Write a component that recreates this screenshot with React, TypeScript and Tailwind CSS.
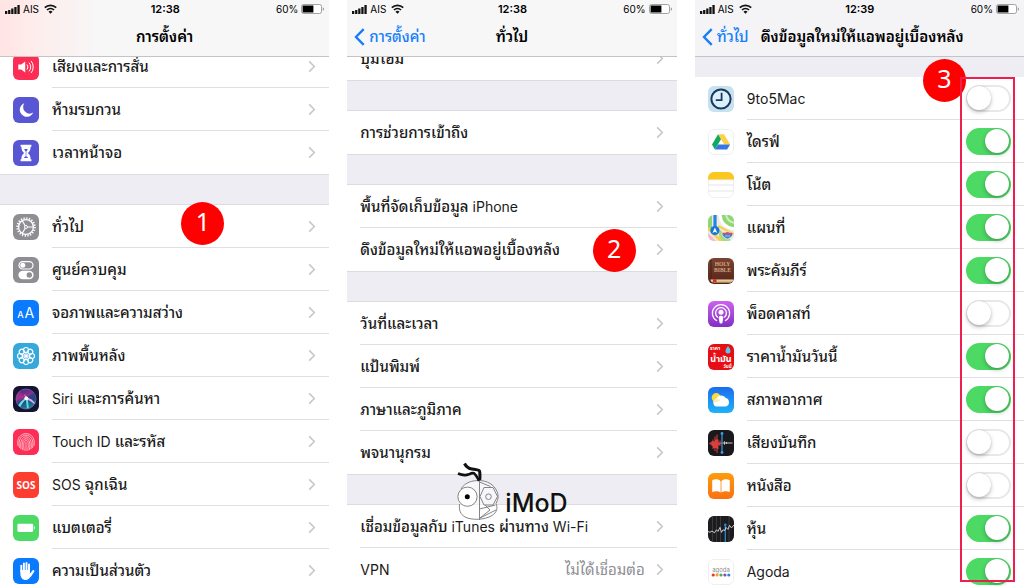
import React from 'react';

type IconProps = { label?: string };

const svgProps = { viewBox: '0 0 26 26', className: 'size-[26px] shrink-0', 'aria-hidden': true } as const;

function Tile({ fill, children }: { fill: string; children?: React.ReactNode }) {
  return (
    <svg {...svgProps}>
      <rect width="26" height="26" rx="6" fill={fill} />
      {children}
    </svg>
  );
}

const SoundIcon = () => (
  <Tile fill="#fe2d55">
    <path d="M5.3 10.6h3l3.9-3.2v11.2l-3.9-3.2h-3z" fill="#fff" />
    <path d="M14.2 10.8a3.4 3.4 0 0 1 0 4.4M16.3 9a6 6 0 0 1 0 8M18.4 7.4a9 9 0 0 1 0 11.2" fill="none" stroke="#fff" strokeWidth="1" strokeLinecap="round" />
  </Tile>
);

const MoonIcon = () => (
  <Tile fill="#5856d2">
    <path d="M11.3 6.2a7 7 0 1 0 8.9 9.3A6.6 6.6 0 0 1 11.3 6.2z" fill="#fff" />
  </Tile>
);

const HourglassIcon = () => (
  <Tile fill="#5856d2">
    <path d="M7.6 4.8h10.8v2h-.8c0 3.2-.9 4.6-2.7 6.2 1.8 1.6 2.7 3 2.7 6.2h.8v2H7.6v-2h.8c0-3.2.9-4.6 2.7-6.2-1.8-1.6-2.7-3-2.7-6.2h-.8z" fill="#fff" />
    <path d="M11.3 9h3.4c-.3 1.3-.7 2-1.4 2.600v4.700c.9.400 1.500.900 1.800 1.800h-4.200c.3-.9.9-1.400 1.800-1.800v-4.700c-.7-.6-1.100-1.300-1.400-2.600z" fill="#5856d2" />
  </Tile>
);

const GearIcon = () => (
  <Tile fill="#8e8e93">
    <g fill="none" stroke="#fff">
      <circle cx="13" cy="13" r="8.8" strokeWidth="1.9" strokeDasharray="1.3 1.46" />
      <circle cx="13" cy="13" r="7.4" strokeWidth="1.3" />
      <path d="M14.500 13h5.700M12.200 11.700l-2.900-5M12.200 14.300l-2.900 5" strokeWidth="1.2" />
      <circle cx="13" cy="13" r="1.500" strokeWidth="1" />
    </g>
  </Tile>
);

const ControlsIcon = () => (
  <Tile fill="#8e8e93">
    <rect x="6" y="4.600" width="14" height="7.400" rx="3.700" fill="none" stroke="#fff" strokeWidth="1.200" />
    <circle cx="9.800" cy="8.300" r="2.500" fill="#fff" />
    <rect x="5.400" y="13.800" width="15.200" height="8.400" rx="4.200" fill="#fff" />
    <circle cx="16.300" cy="18" r="2.700" fill="#8e8e93" />
  </Tile>
);

const DisplayIcon = () => (
  <Tile fill="#0a7aff">
    <text x="4.300" y="17.700" fontSize="9" fontWeight="500" fill="#fff" fontFamily="Inter, sans-serif">A</text>
    <text x="11.600" y="17.700" fontSize="14" fill="#fff" fontFamily="Inter, sans-serif">A</text>
  </Tile>
);

const WallpaperIcon = () => (
  <Tile fill="#36a9dc">
    <g fill="none" stroke="#fff" strokeWidth="1.100">
      {[0, 45, 90, 135, 180, 225, 270, 315].map((a) => (
        <circle key={a} cx="13" cy="7" r="2.500" transform={`rotate(${a} 13 13)`} />
      ))}
      {[22, 67, 112, 157, 202, 247, 292, 337].map((a) => (
        <circle key={a} cx="13" cy="10" r="1.400" strokeWidth=".6" transform={`rotate(${a} 13 13)`} />
      ))}
    </g>
    <circle cx="13" cy="13" r="1.600" fill="#fff" />
  </Tile>
);

const SiriIcon = () => (
  <Tile fill="#161433">
    <defs>
      <linearGradient id="siri-orb" x1=".3" y1="0" x2=".6" y2="1">
        <stop offset="0" stopColor="#4a2a86" />
        <stop offset=".4" stopColor="#93318f" />
        <stop offset=".6" stopColor="#274a86" />
        <stop offset="1" stopColor="#1b8697" />
      </linearGradient>
    </defs>
    <circle cx="13" cy="13" r="10" fill="url(#siri-orb)" stroke="#7c84b8" strokeWidth=".6" />
    <path d="M13 12 6 5.500C4 7.500 3.200 10 3.200 13z" fill="#b6308c" opacity=".6" />
    <path d="M13.500 11 21 7c1.500 2.500 2 5 1.800 8z" fill="#23447e" opacity=".8" />
    <path d="M13.500 11.500C9 14 6.500 17 5.500 19.500l1.800 1.500c1.200-3 3.500-6 6.200-8z" fill="#67e8e4" />
    <path d="M12.800 12.500 14 22.500l1.800-.3-1-9.700z" fill="#5ee0d5" />
    <path d="M14 11.500c3.500 1 6 2.800 7.800 5.500l-.6 1c-2.400-2.200-4.700-3.500-7.700-4.500z" fill="#d9b8f5" />
    <path d="M13 12.500 11 8l3.500 3.500z" fill="#ee9ed8" />
    <circle cx="13.300" cy="12.300" r="1.900" fill="#fff" />
  </Tile>
);

const TouchIcon = () => (
  <Tile fill="#fe2d55">
    <g fill="none" stroke="#ffd3dc" strokeWidth=".8" strokeLinecap="round">
      <path d="M5 16.500C3.400 9.500 7.600 4.600 13 4.600s9.600 4.900 8 11.900" />
      <path d="M6.400 18.500c-1.700-8.500 2.500-12.300 6.600-12.300s8.300 3.800 6.600 12.300" />
      <path d="M7.900 19.800C6.600 11.500 9.700 7.900 13 7.900s6.400 3.600 5.100 11.900" />
      <path d="M9.600 20.700c-1.500-8 .8-11 3.400-11s4.900 3 3.400 11" />
      <path d="M11.200 21.300c-1-7-.4-9.900 1.800-9.900s2.800 2.900 1.800 9.900" />
      <path d="M13 13.200v8.300" />
    </g>
  </Tile>
);

const SosIcon = () => (
  <Tile fill="#fc3d30">
    <text x="13" y="16.800" fontSize="10" fontWeight="700" textAnchor="middle" fill="#fff" fontFamily="'Open Sans', sans-serif">SOS</text>
  </Tile>
);

const BatteryTileIcon = () => (
  <Tile fill="#4cd964">
    <rect x="4.400" y="8.700" width="15.800" height="8.200" rx="1.400" fill="#fff" />
    <path d="M21 11.200c1.200.4 1.200 2.800 0 3.200z" fill="#fff" />
  </Tile>
);

const HandIcon = () => (
  <Tile fill="#0a7aff">
    <g stroke="#fff" strokeLinecap="round" fill="none" strokeWidth="1.900">
      <path d="M8.300 14V7.600M10.900 13V5.400M13.500 13V5M16 13V6.500" />
      <path d="M17.300 17.500l3-4.300" strokeWidth="2.200" />
    </g>
    <path d="M7.400 12h9.500v3.500l2.400-1.500c-.8 3-2.300 7.600-5.900 7.900-4 .3-6-2.500-6-6z" fill="#fff" />
  </Tile>
);

const ClockAppIcon = () => (
  <Tile fill="#c7e1ef">
    <circle cx="13" cy="13" r="9.600" fill="#dcf0fa" stroke="#173a60" strokeWidth="2" />
    <path d="M13.600 6.800v7.400H7.800" fill="none" stroke="#173a60" strokeWidth="1.800" />
  </Tile>
);

const WhiteTile = ({ children }: { children: React.ReactNode }) => (
  <svg {...svgProps}>
    <rect x=".5" y=".5" width="25" height="25" rx="5.500" fill="#fff" stroke="#efefef" />
    {children}
  </svg>
);

const DriveIcon = () => (
  <WhiteTile>
    <path d="M10.100 5.200h5.900l6.100 10.300h-5.900z" fill="#ffcf44" />
    <path d="M10.100 5.200 13 10.300 6.900 20.600 4 15.500z" fill="#11a861" />
    <path d="M10 15.500h12.100l-3 5.100H6.900z" fill="#3777e3" />
  </WhiteTile>
);

const NotesIcon = () => (
  <WhiteTile>
    <path d="M0 7.400V6a6 6 0 0 1 6-6h14a6 6 0 0 1 6 6v1.400z" fill="#fcc71c" />
    <path d="M.5 13h25M.5 19h25" stroke="#dedede" strokeWidth=".8" />
    <path d="M0 7.800h26" stroke="#d9ccb0" strokeWidth=".6" strokeDasharray="1 .6" />
  </WhiteTile>
);

const MapsIcon = () => (
  <svg {...svgProps}>
    <clipPath id="maps-clip"><rect width="26" height="26" rx="6" /></clipPath>
    <g clipPath="url(#maps-clip)">
      <rect width="26" height="26" fill="#efe9df" />
      <path d="M13 0h13v14C18 14 13 8 13 0z" fill="#8fd674" />
      <path d="M0 0h4v13l-4 3z" fill="#8fd674" />
      <path d="M0 18l8 8H0z" fill="#f6b8cd" />
      <path d="M10 13l14 13H12z" fill="#a6dc86" />
      <path d="M12-2c0 10 5 15 15 16" fill="none" stroke="#fff" strokeWidth="3" />
      <path d="M18-2c0 6 3 9 9 10" fill="none" stroke="#cdeeb9" strokeWidth="2" />
      <path d="M0 13l13 13" stroke="#fad04b" strokeWidth="3" />
      <path d="M10 11l16 8" stroke="#fad04b" strokeWidth="2" />
      <path d="M7 0v14" stroke="#2583ea" strokeWidth="3.200" />
      <circle cx="6.900" cy="15.600" r="4.600" fill="#1877dd" />
      <path d="M6.900 12.400l2.400 5.600-2.400-1.200-2.400 1.200z" fill="#fff" />
      <path d="M14.500 17.500c2 .5 3-.2 5-.8 2 .6 3 1.300 5 .8 1.200 3-1.500 5.500-5 6.500-3.500-1-6.200-3.500-5-6.500z" fill="#3c83dd" stroke="#fff" strokeWidth=".6" />
      <path d="M14.800 17.800h9.500v1.600h-9.500z" fill="#e64a50" />
      <path d="M17 21h5" stroke="#9cc4f2" strokeWidth="1" />
    </g>
  </svg>
);

const BibleIcon = () => (
  <Tile fill="url(#bible-bg)">
    <defs>
      <linearGradient id="bible-bg" x1="0" y1="0" x2="0" y2="1">
        <stop offset="0" stopColor="#7a4230" />
        <stop offset="1" stopColor="#532519" />
      </linearGradient>
    </defs>
    <path d="M3 2v19" stroke="#4d2118" strokeWidth="1" />
    <path d="M2.500 21.500h22.800c-.4 1.500-1.200 2.600-2.500 3H5c-1.600-.4-2.400-1.500-2.500-3z" fill="#efd9a6" />
    <path d="M4 23.200h20" stroke="#b38a57" strokeWidth=".6" />
    <path d="M5 21.300h3.500V25l-1.700-1.200L5 25z" fill="#d62b25" />
    <g fill="#d2a684" fontFamily="'Liberation Serif', serif" fontSize="5.500" fontWeight="700" textAnchor="middle">
      <text x="14.500" y="8">HOLY</text>
      <text x="14.500" y="14">BIBLE</text>
    </g>
  </Tile>
);

const PodcastIcon = () => (
  <Tile fill="url(#podcast-bg)">
    <defs>
      <linearGradient id="podcast-bg" x1="0" y1="0" x2="0" y2="1">
        <stop offset="0" stopColor="#cb63ed" />
        <stop offset="1" stopColor="#812fc4" />
      </linearGradient>
    </defs>
    <g fill="none" stroke="#fff" strokeLinecap="round">
      <path d="M8.600 19.600a8.600 8.600 0 1 1 8.800 0" strokeWidth="1.200" />
      <path d="M9.400 16.100a5.400 5.400 0 1 1 7.200 0" strokeWidth="1.300" />
    </g>
    <circle cx="13" cy="11.300" r="2.500" fill="#fff" />
    <path d="M10.700 16.300c0-2.200 4.600-2.200 4.600 0l-.8 5.300c-.2 1.300-2.800 1.300-3 0z" fill="#fff" />
  </Tile>
);

const OilIcon = () => (
  <Tile fill="#e60d15">
    <g fill="#fff" fontFamily="'Noto Sans Thai', 'Noto Sans', sans-serif" fontWeight="700">
      <text x="2" y="5.500" fontSize="5">ราคา</text>
      <text x="13" y="17.500" fontSize="9" textAnchor="middle">น้ำมัน</text>
      <text x="15.500" y="24" fontSize="4.500">วันนี้</text>
    </g>
    <path d="M20 2c1.600 2.400 2.500 3.500 2.500 4.900a2.500 2.500 0 0 1-5 0C17.500 5.500 18.400 4.400 20 2z" fill="#54c9ec" />
  </Tile>
);

const WeatherIcon = () => (
  <Tile fill="url(#weather-bg)">
    <defs>
      <linearGradient id="weather-bg" x1="0" y1="0" x2="0" y2="1">
        <stop offset="0" stopColor="#1b6cec" />
        <stop offset="1" stopColor="#1fb3f9" />
      </linearGradient>
    </defs>
    <circle cx="8.200" cy="10.600" r="4.500" fill="#fddb3a" />
    <path d="M8.500 19.500a3.800 3.800 0 0 1-.3-7.400 5.300 5.300 0 0 1 9.600-1 4.400 4.400 0 0 1 .2 8.400z" fill="#fff" />
    <path d="M8 12.200c1.800-.4 3.200 0 4.300 1.100L9 15c-1.500 0-2.800.3-4 1.200.2-2 1.300-3.500 3-4z" fill="#fdeeb0" />
  </Tile>
);

const VoiceIcon = () => (
  <Tile fill="#19181d">
    <path d="M1.500 12.500h2v-1.500h1v-1.500h1v2h1v-5h1v3h1v-5h1v5h1v3h1v-2h1v2h2v1.500h-2v2h-1v-1h-1v4h-1v4h-1v-5h-1v3h-1v-3h-1v1h-1v-3h-1v-1.500h-2z" fill="#d6403d" />
    <path d="M14.500 13h10M16.500 11.300v3.400M18.500 12v2" stroke="#c8c8cc" strokeWidth="1" />
    <path d="M14 4v18" stroke="#3c9cde" strokeWidth="1.200" />
    <circle cx="14" cy="3.500" r="1.400" fill="#3c9cde" />
    <circle cx="14" cy="22.500" r="1.400" fill="#3c9cde" />
  </Tile>
);

const BooksIcon = () => (
  <Tile fill="url(#books-bg)">
    <defs>
      <linearGradient id="books-bg" x1="0" y1="0" x2="0" y2="1">
        <stop offset="0" stopColor="#fd9d0c" />
        <stop offset="1" stopColor="#fa7013" />
      </linearGradient>
    </defs>
    <path d="M12.600 8.200C10.900 5.900 6.600 5.900 4.200 7.200v11.800c2.400-1.100 6.500-1.100 8.400.5zM13.400 8.200c1.700-2.300 6-2.300 8.400-1v11.800c-2.400-1.100-6.500-1.100-8.400.5z" fill="#fff" />
  </Tile>
);

const StocksIcon = () => (
  <Tile fill="#1c1c1f">
    <path d="M4.500 0v26M8.500 0v26M12.500 0v26M21 0v26" stroke="#46464a" strokeWidth=".7" />
    <path d="M17.300 8v18" stroke="#1f8fd4" strokeWidth="1.300" />
    <path d="M0 15.500l2 .8 2-1.300 2.500 1.800 2-3 1.500 1.600 2-4 1.500 5 1.500-2.500 2 .5 1-3 2 2 1.500-4 2 2.500L26 9" fill="none" stroke="#dcdcde" strokeWidth=".9" />
    <circle cx="17.300" cy="8.800" r="1.300" fill="#1f8fd4" />
  </Tile>
);

const AgodaIcon = () => (
  <WhiteTile>
    <text x="13" y="13" fontSize="6" textAnchor="middle" fill="#8a8a8d" fontFamily="Inter, sans-serif">agoda</text>
    {['#e8382f', '#f6a623', '#4caf50', '#8c46b5', '#2f87dc'].map((c, i) => (
      <circle key={c} cx={5.2 + i * 3.9} cy="16" r="1.600" fill={c} />
    ))}
  </WhiteTile>
);

const Chevron = () => (
  <svg viewBox="0 0 8 14" className="h-[13px] w-[8px] shrink-0" aria-hidden>
    <path d="M1 1.500 6.500 7 1 12.500" fill="none" stroke="#c5c5ca" strokeWidth="1.600" />
  </svg>
);

function StatusBar({ time }: { time: string }) {
  return (
    <div className="grid h-[18px] grid-cols-3 items-center pr-[4px] pl-[5px] text-[10px] text-black">
      <div className="flex items-center gap-[3px]">
        <svg viewBox="0 0 15 9" className="h-[9px] w-[15px]" aria-hidden>
          <path d="M0 6h2.300v3H0zM3.100 5h2.300v4H3.100zM6.200 3.500h2.300V9H6.200zM9.300 2h2.300v7H9.300zM12.400 0h2.300v9h-2.300z" fill="#111" />
        </svg>
        <span>AIS</span>
        <svg viewBox="0 0 13 10" className="ml-[2px] h-[10px] w-[13px]" aria-hidden>
          <g fill="none" stroke="#111" strokeWidth="1.700">
            <path d="M.8 3.600a8.300 8.300 0 0 1 11.400 0" />
            <path d="M3 6a5 5 0 0 1 7 0" />
          </g>
          <path d="M4.500 7.700a2.900 2.900 0 0 1 4 0l-2 2z" fill="#111" />
        </svg>
      </div>
      <div className="text-center text-[11px] font-semibold">{time}</div>
      <div className="flex items-center justify-end gap-[3px]">
        <span>60%</span>
        <svg viewBox="0 0 24 10" className="h-[10px] w-[24px]" aria-hidden>
          <rect x=".5" y=".5" width="20" height="9" rx="2" fill="#fff" stroke="#8d8d8d" strokeWidth=".8" />
          <rect x="1.600" y="1.500" width="10.800" height="7" fill="#000" />
          <path d="M21.800 3.200c1.500.5 1.500 3.100 0 3.600z" fill="#8d8d8d" />
        </svg>
      </div>
    </div>
  );
}

function Header({ time, title, back, tint = 'bg-[#f7f7f8]' }: { time: string; title: string; back?: string; tint?: string }) {
  return (
    <header className={`relative z-10 h-[57px] shrink-0 border-b border-[#c4c4c7] ${tint}`}>
      <StatusBar time={time} />
      <div className="grid h-[38px] grid-cols-[1fr_auto_1fr] items-center gap-[12px] px-[7px]">
        <div>
          {back && (
            <button type="button" className="flex items-center gap-[4px] text-[15px] font-medium whitespace-nowrap text-[#157efb]">
              <svg viewBox="0 0 11 18" className="h-[18px] w-[11px]" aria-hidden>
                <path d="M9.700 1.200 2 9l7.700 7.800" fill="none" stroke="#157efb" strokeWidth="2.400" />
              </svg>
              {back}
            </button>
          )}
        </div>
        <h1 className="text-[15px] font-semibold whitespace-nowrap text-black">{title}</h1>
        <div />
      </div>
    </header>
  );
}

function Badge({ n, place }: { n: number; place: string }) {
  return (
    <span className={`absolute flex size-[43px] items-center justify-center rounded-full bg-[#fe0000] pb-[4px] font-['Noto_Sans'] text-[25px] leading-none text-white ${place}`}>
      {n}
    </span>
  );
}

/* Thai runs are set a step heavier, and Latin ones a step smaller, so that both look even. */
function Label({ text }: { text: string }) {
  return (
    <span className="flex-1 pt-[2px] font-medium whitespace-nowrap">
      {text.split(/([A-Za-z0-9-]+(?: [A-Za-z0-9-]+)*)/).map((part, i) =>
        i % 2 ? <span key={i} className="text-[14px] font-normal">{part}</span> : part,
      )}
    </span>
  );
}

type Row = { label: string; icon?: React.ComponentType<IconProps>; value?: string; badge?: React.ReactNode };

function LinkRow({ label, icon: Icon, value, badge }: Row) {
  return (
    <li className="group relative pl-[13px]">
      <button type="button" className="flex w-full items-center gap-[13px] text-left">
        {Icon && <Icon />}
        <span className="flex h-[43px] min-w-0 flex-1 items-center gap-[11px] border-b border-[#dfdfe2] pr-[13px] group-last:border-transparent">
          <Label text={label} />
          {value && <span className="pt-[2px] whitespace-nowrap text-[#8e8e93]">{value}</span>}
          <Chevron />
        </span>
      </button>
      {badge}
    </li>
  );
}

const Group = ({ rows }: { rows: Row[] }) => (
  <ul className="bg-white">
    {rows.map((r) => <LinkRow key={r.label} {...r} />)}
  </ul>
);

const Gap = () => <div className="h-[31px] border-y border-[#dcdce0] bg-[#eeedf3]" />;

function SwitchRow({ label, icon: Icon, on }: { label: string; icon: React.ComponentType<IconProps>; on: boolean }) {
  return (
    <li className="pl-[13px]">
      <label className="flex items-center gap-[13px]">
        <Icon />
        <span className="flex h-[43px] flex-1 items-center border-b border-[#dfdfe2] pr-[13px]">
          <Label text={label} />
          <input
            type="checkbox"
            role="switch"
            defaultChecked={on}
            className="flex h-[27px] w-[45px] appearance-none items-center rounded-full border-2 border-[#e8e8ea] bg-white before:-ml-[1px] before:size-[24px] before:rounded-full before:bg-white before:shadow-[0_2px_4px_rgba(0,0,0,0.25),0_0_1px_rgba(0,0,0,0.2)] checked:border-[#4cd964] checked:bg-[#4cd964] checked:before:ml-[17px]"
          />
        </span>
      </label>
    </li>
  );
}

const settingsTop: Row[] = [
  { label: 'เสียงและการสั่น', icon: SoundIcon },
  { label: 'ห้ามรบกวน', icon: MoonIcon },
  { label: 'เวลาหน้าจอ', icon: HourglassIcon },
];

const settingsMain: Row[] = [
  { label: 'ทั่วไป', icon: GearIcon, badge: <Badge n={1} place="-top-[3px] right-[105px]" /> },
  { label: 'ศูนย์ควบคุม', icon: ControlsIcon },
  { label: 'จอภาพและความสว่าง', icon: DisplayIcon },
  { label: 'ภาพพื้นหลัง', icon: WallpaperIcon },
  { label: 'Siri และการค้นหา', icon: SiriIcon },
  { label: 'Touch ID และรหัส', icon: TouchIcon },
  { label: 'SOS ฉุกเฉิน', icon: SosIcon },
  { label: 'แบตเตอรี่', icon: BatteryTileIcon },
  { label: 'ความเป็นส่วนตัว', icon: HandIcon },
];

const generalGroups: Row[][] = [
  [{ label: 'ปุ่มโฮม' }],
  [{ label: 'การช่วยการเข้าถึง' }],
  [
    { label: 'พื้นที่จัดเก็บข้อมูล iPhone' },
    { label: 'ดึงข้อมูลใหม่ให้แอพอยู่เบื้องหลัง', badge: <Badge n={2} place="top-[1px] right-[41px]" /> },
  ],
  [{ label: 'วันที่และเวลา' }, { label: 'แป้นพิมพ์' }, { label: 'ภาษาและภูมิภาค' }, { label: 'พจนานุกรม' }],
  [{ label: 'เชื่อมข้อมูลกับ iTunes ผ่านทาง Wi-Fi' }, { label: 'VPN', value: 'ไม่ได้เชื่อมต่อ' }],
];

const apps = [
  { label: '9to5Mac', icon: ClockAppIcon, on: false },
  { label: 'ไดรฟ์', icon: DriveIcon, on: true },
  { label: 'โน้ต', icon: NotesIcon, on: true },
  { label: 'แผนที่', icon: MapsIcon, on: true },
  { label: 'พระคัมภีร์', icon: BibleIcon, on: true },
  { label: 'พ็อดคาสท์', icon: PodcastIcon, on: false },
  { label: 'ราคาน้ำมันวันนี้', icon: OilIcon, on: true },
  { label: 'สภาพอากาศ', icon: WeatherIcon, on: true },
  { label: 'เสียงบันทึก', icon: VoiceIcon, on: false },
  { label: 'หนังสือ', icon: BooksIcon, on: false },
  { label: 'หุ้น', icon: StocksIcon, on: true },
  { label: 'Agoda', icon: AgodaIcon, on: true },
];

function Watermark() {
  return (
    <div className="pointer-events-none absolute top-[462px] left-[108px] flex items-end">
      <svg viewBox="0 0 44 60" className="h-[60px] w-[44px]" aria-hidden>
        <g fill="none" stroke="#777" strokeWidth=".9">
          <path d="M6 27c4-7 12-8.500 18-8.500 8 0 15 4 18 11 2 5 1 8-1 12 2 4 1 9-4 12-7 4.500-20 5-27 1.500-5-3-6-7-5.500-13" fill="#fff" fillOpacity=".55" />
          <circle cx="12.500" cy="34.700" r="9.600" fill="#fff" />
          <path d="M24.500 19v39M24.500 20l11 4.500M29 25.500h9l4.500 9-4.500 8.500h-9l-4-8.500zM24.500 47l16-4M30 43l5 5-10 8 16-8" />
          <circle cx="33.500" cy="34.700" r="2.800" />
        </g>
        <circle cx="12.300" cy="34.700" r="2.500" fill="#000" />
        <g fill="none" stroke="#111" strokeWidth="3" strokeLinejoin="round">
          <path d="M9.500 1.500C11 4.500 13 6.500 17 7s6.500.5 7.500 2c.6 2 .5 6 .3 9" />
          <path d="M3 11.500c4 1.800 8 2 11 .8 2-1 3.500-1.600 5-1 2 1.500 3.500 4.500 5 7.500" strokeWidth="2.600" />
        </g>
      </svg>
      <span className="ml-[6px] font-['Inter'] text-[25px] font-medium text-[#111]">iMoD</span>
    </div>
  );
}

export default function App() {
  return (
    <main className="grid h-screen grid-cols-3 gap-[18px] overflow-hidden bg-white font-[Inter,'Noto_Sans_Thai_Looped','Noto_Looped_Thai','Loma','Waree','Noto_Sans_Thai','Noto_Sans',sans-serif] text-[15px] text-[#1a1a1a]">
      <section className="relative flex min-w-0 flex-col overflow-hidden">
        <Header time="12:38" title="การตั้งค่า" tint="bg-[linear-gradient(90deg,#ffe4e3_0%,#fdeeed_12%,#f7f7f8_32%)]" />
        <div className="-mt-[12px]">
          <Group rows={settingsTop} />
          <Gap />
          <Group rows={settingsMain} />
        </div>
      </section>

      <section className="relative flex min-w-0 flex-col overflow-hidden">
        <Header time="12:38" title="ทั่วไป" back="การตั้งค่า" />
        <div className="-mt-[20px]">
          {generalGroups.map((rows, i) => (
            <React.Fragment key={i}>
              {i > 0 && <Gap />}
              <Group rows={rows} />
            </React.Fragment>
          ))}
        </div>
        <Watermark />
      </section>

      <section className="relative flex min-w-0 flex-col overflow-hidden">
        <Header time="12:39" title="ดึงข้อมูลใหม่ให้แอพอยู่เบื้องหลัง" back="ทั่วไป" tint="bg-[#f4f4f7]" />
        <div className="h-[20px] shrink-0 bg-[#eeedf3]" />
        <ul>
          {apps.map((a) => <SwitchRow key={a.label} {...a} />)}
        </ul>
        <Badge n={3} place="top-[59px] right-[58px]" />
        <div className="pointer-events-none absolute top-[77px] right-[9px] bottom-[4px] w-[55px] border-2 border-[#ee1f4e]" />
      </section>
    </main>
  );
}
